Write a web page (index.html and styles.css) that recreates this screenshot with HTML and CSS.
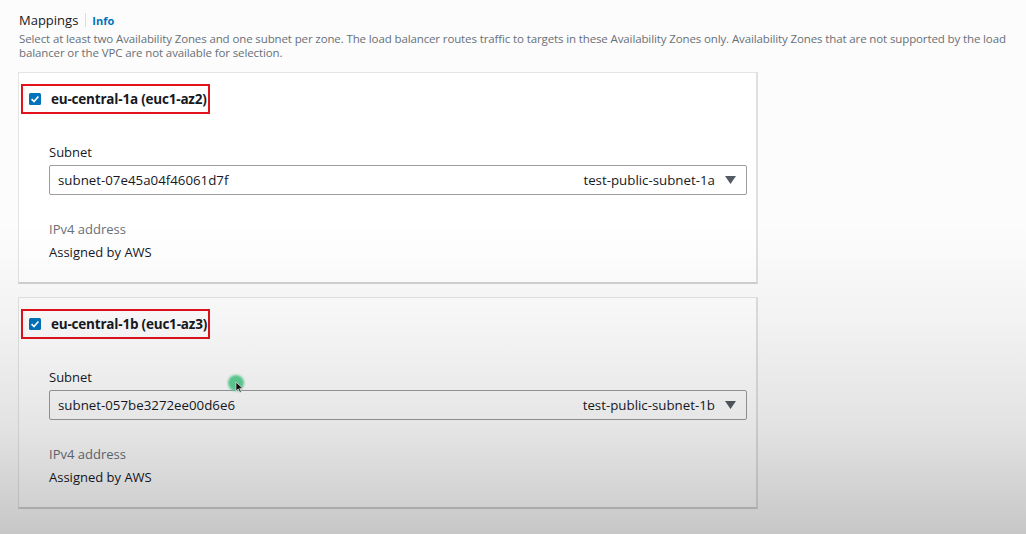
FILE: index.html
```html
<!DOCTYPE html>
<html>
<head>
<meta charset="utf-8">
<link rel="stylesheet" href="styles.css">
</head>
<body>
<div class="page">
  <div class="header">
    <span class="title">Mappings</span>
    <span class="sep"></span>
    <span class="info">Info</span>
  </div>
  <p class="desc">Select at least two Availability Zones and one subnet per zone. The load balancer routes traffic to targets in these Availability Zones only. Availability Zones that are not supported by the load balancer or the VPC are not available for selection.</p>

  <div class="cards">
    <div class="card">
      <div class="az">
        <span class="cb"><svg viewBox="0 0 12 12" width="12" height="12"><rect width="12" height="12" rx="1.5" fill="#0073bb"/><path d="M2.6 6.2 L5 8.5 L9.4 3.5" fill="none" stroke="#fff" stroke-width="1.7"/></svg></span>
        <span class="az-name">eu-central-1a (euc1-az2)</span>
      </div>
      <div class="body">
        <div class="label">Subnet</div>
        <div class="select">
          <span class="val">subnet-07e45a04f46061d7f</span>
          <span class="tag">test-public-subnet-1a</span>
          <svg class="caret" viewBox="0 0 11 8" width="11" height="8"><path d="M0 0 H11 L5.5 8 Z" fill="#545b64"/></svg>
        </div>
        <div class="meta">IPv4 address</div>
        <div class="value">Assigned by AWS</div>
      </div>
    </div>

    <div class="card">
      <div class="az">
        <span class="cb"><svg viewBox="0 0 12 12" width="12" height="12"><rect width="12" height="12" rx="1.5" fill="#0073bb"/><path d="M2.6 6.2 L5 8.5 L9.4 3.5" fill="none" stroke="#fff" stroke-width="1.7"/></svg></span>
        <span class="az-name">eu-central-1b (euc1-az3)</span>
      </div>
      <div class="body">
        <div class="label">Subnet</div>
        <div class="select">
          <span class="val">subnet-057be3272ee00d6e6</span>
          <span class="tag">test-public-subnet-1b</span>
          <svg class="caret" viewBox="0 0 11 8" width="11" height="8"><path d="M0 0 H11 L5.5 8 Z" fill="#545b64"/></svg>
        </div>
        <div class="meta">IPv4 address</div>
        <div class="value">Assigned by AWS</div>
      </div>
    </div>
  </div>
</div>
<div class="cursor">
  <span class="halo"></span>
  <svg class="arrow" viewBox="0 0 10 14" width="9" height="13"><path d="M1 1 L1 11 L3.6 8.6 L5.4 12.6 L7 11.9 L5.3 8 L8.8 8 Z" fill="#111" stroke="#fff" stroke-width="0.8"/></svg>
</div>
<div class="vignette"></div>
</body>
</html>
```

FILE: styles.css
```css
html, body {
  margin: 0;
  padding: 0;
  background: #fcfcfc;
  font-family: "Open Sans", "Noto Sans", sans-serif;
  color: #16191f;
}

.page {
  padding: 12px 0 0 19px;
  width: 1000px;
}

.header {
  display: flex;
  align-items: center;
  height: 16px;
}

.title {
  font-size: 13px;
  color: #16191f;
}

.sep {
  width: 1px;
  height: 14px;
  background: #dcdcdc;
  margin: 0 6px 0 7px;
}

.info {
  font-size: 11px;
  font-weight: 700;
  color: #0073bb;
}

.desc {
  margin: 4px 0 0 0;
  font-size: 11.5px;
  line-height: 14px;
  color: #687078;
  width: 990px;
  letter-spacing: -0.12px;
}

.cards {
  margin-left: -1px;
  margin-top: 12px;
  display: flex;
  flex-direction: column;
  gap: 13px;
}

.card {
  width: 735px;
  background: #ffffff;
  border: 1px solid #e4e4e4;
  border-bottom: 2px solid #d2d2d2;
  border-right: 2px solid #e0e0e0;
  padding: 11px 0 0 2px;
  height: 198px;
}

.az {
  display: inline-flex;
  align-items: center;
  border: 2px solid #e3131c;
  width: 185px;
  height: 26px;
  box-sizing: content-box;
}

.cb {
  display: flex;
  margin-left: 6px;
  margin-right: 10px;
}

.az-name {
  font-size: 13.5px;
  font-weight: 700;
  letter-spacing: -0.2px;
}

.body {
  padding: 30px 0 0 28px;
}

.label {
  font-size: 13px;
  line-height: 16px;
  height: 16px;
}

.select {
  margin-top: 5px;
  height: 28px;
  border: 1px solid #9a9da1;
  border-radius: 2px;
  display: flex;
  align-items: center;
  padding: 0 10px 0 8px;
  box-sizing: content-box;
  width: 678px;
  font-size: 13.3px;
}

.val {
  flex: 1;
}

.tag {
  margin-right: 10px;
}

.caret {
  display: block;
}

.meta {
  margin-top: 26px;
  font-size: 13px;
  line-height: 16px;
  color: #687078;
}

.value {
  margin-top: 7px;
  font-size: 13px;
  line-height: 16px;
}

.cursor {
  position: absolute;
  left: 228px;
  top: 375px;
  width: 20px;
  height: 20px;
}

.halo {
  position: absolute;
  left: 0;
  top: 0;
  width: 16px;
  height: 16px;
  border-radius: 50%;
  background: #5fd497;
  filter: blur(1px);
}

.arrow {
  position: absolute;
  left: 7px;
  top: 6px;
}

.vignette {
  position: absolute;
  left: 0;
  top: 0;
  width: 1026px;
  height: 534px;
  pointer-events: none;
  background: linear-gradient(to bottom,
    rgba(0,0,0,0) 0%,
    rgba(0,0,0,0) 42%,
    rgba(0,0,0,0.04) 60%,
    rgba(0,0,0,0.10) 80%,
    rgba(0,0,0,0.21) 100%);
}
```
